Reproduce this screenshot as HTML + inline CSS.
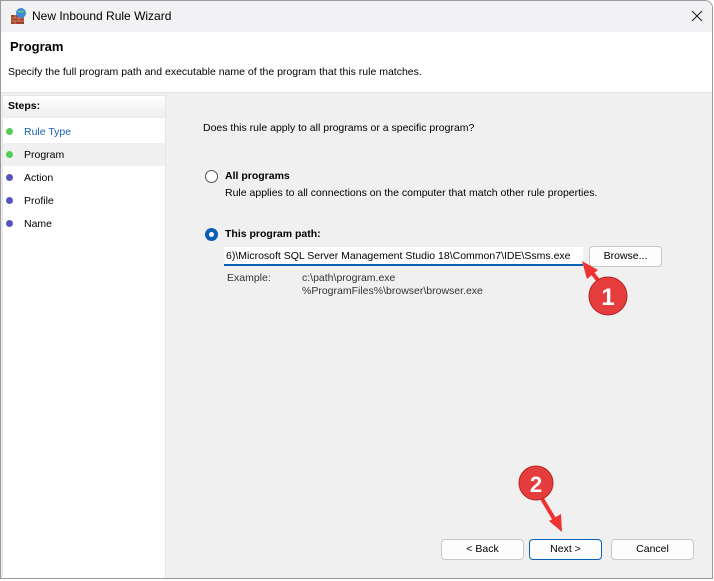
<!DOCTYPE html>
<html><head><meta charset="utf-8"><style>
*{margin:0;padding:0;box-sizing:border-box}
body{width:714px;height:581px;overflow:hidden;background:#fff;font-family:"Liberation Sans",sans-serif;font-size:10.5px;color:#000;position:relative}
.abs{position:absolute}
.win{left:0;top:0;width:713px;height:579px;border:1px solid #9a9a9a;border-radius:0 8px 0 0;overflow:hidden;background:#fff}
.title{left:0;top:0;width:713px;height:31px;background:#f2f2f4}
.btn{position:absolute;height:21px;border:1px solid #c8c8c8;border-radius:4px;background:#fdfdfd;text-align:center;line-height:19px;font-size:10.5px}
.dot{position:absolute;width:7px;height:7px;border-radius:50%}
</style></head><body>
<div class="abs win">
<div class="abs title"></div>
<svg class="abs" style="left:9px;top:6px" width="18" height="18"><rect x="1" y="8" width="13" height="9" fill="#a0402a"/><path d="M1 11h13M1 14h13M5 8v3M9 11v3M5 14v3" stroke="#d08060" stroke-width="1"/><circle cx="11" cy="6" r="5" fill="#3a8ad8"/><path d="M8 4q3 2 6 0" stroke="#6c6" stroke-width="1.5" fill="none"/></svg>
<div class="abs" style="left:31px;top:8px;font-size:12px">New Inbound Rule Wizard</div>
<svg class="abs" style="left:690px;top:9px" width="12" height="12"><path d="M1 1L11 11M11 1L1 11" stroke="#222" stroke-width="1.1"/></svg>
<div class="abs" style="left:9px;top:38px;font-size:13px;font-weight:bold">Program</div>
<div class="abs" style="left:7px;top:65px">Specify the full program path and executable name of the program that this rule matches.</div>
<div class="abs" style="left:0;top:91px;width:713px;height:1px;background:#e3e3e3"></div>
<div class="abs" style="left:0;top:92px;width:713px;height:500px;background:#f0f0f0"></div>
<div class="abs" style="left:1px;top:94px;width:164px;height:490px;background:#fff;border:1px solid #e6e6e6"></div>
<div class="abs" style="left:2px;top:95px;width:162px;height:22px;background:linear-gradient(#fff,#ececec)"></div>
<div class="abs" style="left:7px;top:99px;font-weight:bold">Steps:</div>
<div class="abs" style="left:2px;top:142px;width:162px;height:23px;background:#f0f0f0"></div>
<div class="dot" style="left:5px;top:127px;background:#5c5"></div>
<div class="dot" style="left:5px;top:150px;background:#5c5"></div>
<div class="dot" style="left:5px;top:173px;background:#55b"></div>
<div class="dot" style="left:5px;top:196px;background:#55b"></div>
<div class="dot" style="left:5px;top:219px;background:#55b"></div>
<div class="abs" style="left:23px;top:125px;color:#1a5fb4">Rule Type</div>
<div class="abs" style="left:23px;top:148px">Program</div>
<div class="abs" style="left:23px;top:171px">Action</div>
<div class="abs" style="left:23px;top:194px">Profile</div>
<div class="abs" style="left:23px;top:217px">Name</div>
<div class="abs" style="left:202px;top:121px">Does this rule apply to all programs or a specific program?</div>
<div class="abs" style="left:204px;top:169px;width:13px;height:13px;border:1px solid #555;border-radius:50%;background:#fff"></div>
<div class="abs" style="left:224px;top:169px;font-weight:bold">All programs</div>
<div class="abs" style="left:224px;top:186px">Rule applies to all connections on the computer that match other rule properties.</div>
<div class="abs" style="left:204px;top:227px;width:13px;height:13px;border-radius:50%;background:#0a5fb8"></div>
<div class="abs" style="left:208px;top:231px;width:5px;height:5px;border-radius:50%;background:#fff"></div>
<div class="abs" style="left:224px;top:227px;font-weight:bold">This program path:</div>
<div class="abs" style="left:223px;top:246px;width:359px;height:19px;background:#fff;border-bottom:2px solid #0a5fb8"></div>
<div class="abs" style="left:225px;top:249px;white-space:nowrap">6)\Microsoft SQL Server Management Studio 18\Common7\IDE\Ssms.exe</div>
<div class="btn" style="left:588px;top:245px;width:73px">Browse...</div>
<div class="abs" style="left:226px;top:271px;color:#333">Example:</div>
<div class="abs" style="left:301px;top:271px;color:#333">c:\path\program.exe</div>
<div class="abs" style="left:301px;top:284px;color:#333">%ProgramFiles%\browser\browser.exe</div>
<div class="btn" style="left:440px;top:538px;width:83px">&lt; Back</div>
<div class="btn" style="left:528px;top:538px;width:73px;border-color:#0a5fb8">Next &gt;</div>
<div class="btn" style="left:610px;top:538px;width:83px">Cancel</div>
</div>
<svg class="abs" style="left:0;top:0" width="714" height="581">
<path d="M604 288L590 270" stroke="#e33" stroke-width="4"/>
<path d="M582 261L598 270L587 279Z" fill="#e33"/>
<circle cx="608" cy="296" r="19" fill="#e53d3d" stroke="#b22" stroke-width="1"/>
<text x="608" y="305" text-anchor="middle" font-family="Liberation Sans" font-weight="bold" font-size="24" fill="#fff">1</text>
<path d="M541 497L556 522" stroke="#e33" stroke-width="4"/>
<path d="M562 532L549 521L561 514Z" fill="#e33"/>
<circle cx="536" cy="483" r="17" fill="#e53d3d" stroke="#b22" stroke-width="1"/>
<text x="536" y="492" text-anchor="middle" font-family="Liberation Sans" font-weight="bold" font-size="22" fill="#fff">2</text>
</svg>
</body></html>
